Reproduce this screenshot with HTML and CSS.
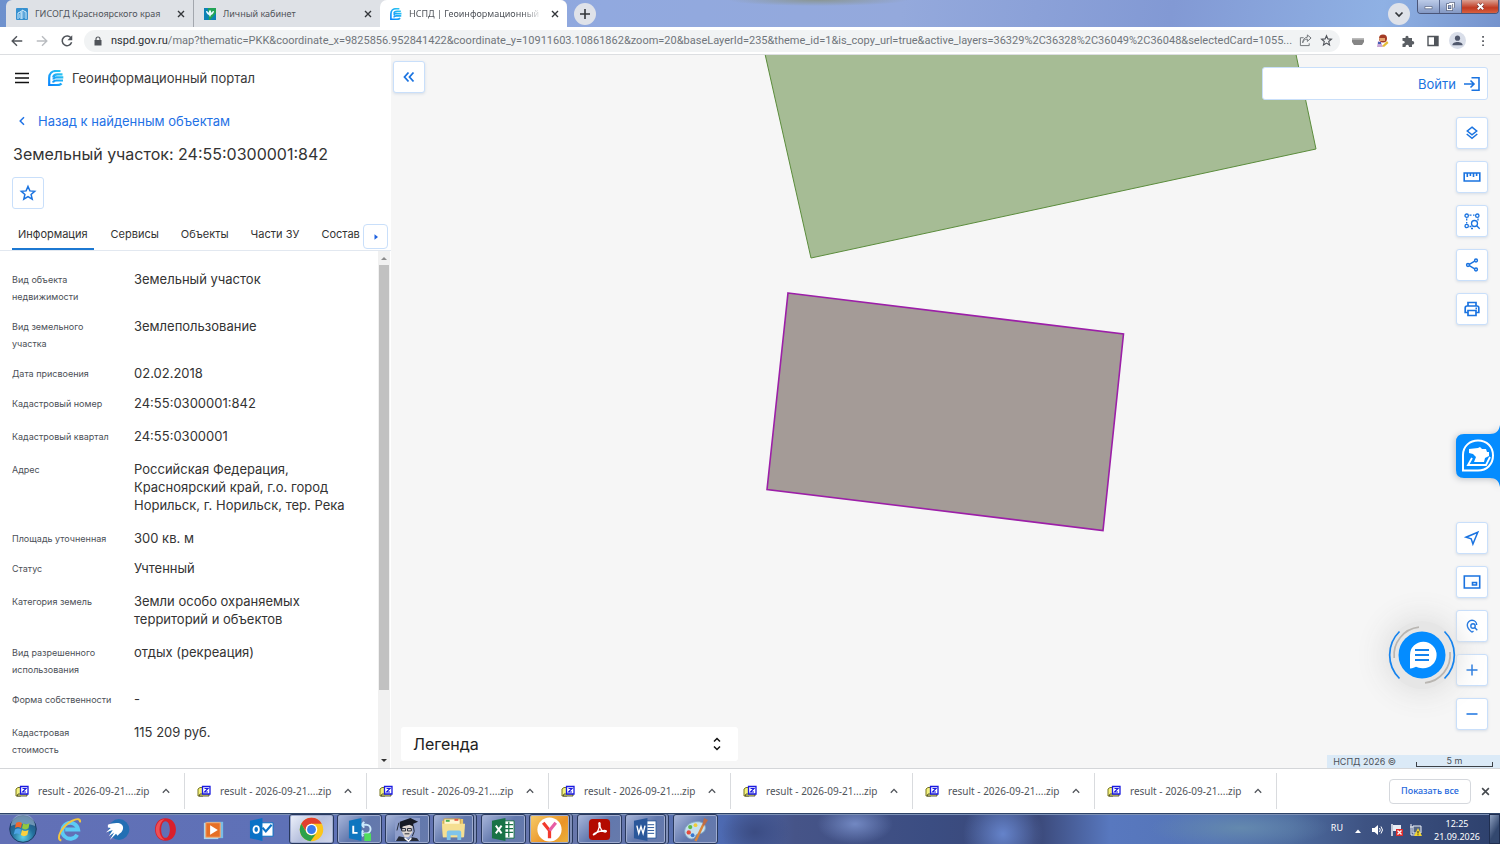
FILE: index.html
```html
<!DOCTYPE html>
<html lang="ru">
<head>
<meta charset="utf-8">
<title>НСПД | Геоинформационный портал</title>
<link rel="stylesheet" href="styles.css">
</head>
<body>
<svg class="defs" aria-hidden="true">
  <symbol id="zip" viewBox="0 0 14 12"><path d="M1 3.500 3 2h3v8.500H1z" fill="#f4f27c" stroke="#77751f"/><path d="M3 8.500h9v2H2z" fill="#f4f27c" stroke="#33331c" stroke-width=".8"/><path d="M5.500 1h7.500v7.500H5.500z" fill="#fff" stroke="#1a1ae0" stroke-width="1.300"/><path d="M7.500 3h3.500l-3.500 3.500H11" fill="none" stroke="#1a1ae0" stroke-width="1.100"/></symbol>
  <symbol id="up" viewBox="0 0 8 6"><path d="M.8 4.800 4 1.400l3.200 3.400" fill="none" stroke="#50545a" stroke-width="1.300"/></symbol>
  <symbol id="cross" viewBox="0 0 8 8"><path d="m1 1 6 6M7 1 1 7" fill="none" stroke="currentColor" stroke-width="1.400"/></symbol>
  <symbol id="nspd" viewBox="0 0 16 16"><path d="M5 15.200H1.200V8C1.200 3.500 4 1 8 1h4.500M5.200 7.500C5.500 5 7.500 4.300 9.500 4.300h5M5.500 9.500c0-1.600 1.200-2.100 3-2.100h6.800M5 12.500c.500-1.600 1.500-2 3.500-2H15M5 15.200h3.500c2.300 0 4-.5 5-1.700" fill="none" stroke="url(#brand)" stroke-width="2.200"/></symbol>
  <linearGradient id="brand" gradientUnits="userSpaceOnUse" x1="0" y1="16" x2="16" y2="0"><stop offset="0" stop-color="#067fff"/><stop offset="1" stop-color="#31d3ee"/></linearGradient>
</svg>

<header class="tabstrip">
  <div class="tabs">
    <div class="tab">
      <svg class="favicon" viewBox="0 0 12 12"><rect width="12" height="12" rx="1" fill="#3791d0"/><path d="M2 11V5l3-1.500V11M6 11V2l4 2v7M7.500 5h1M7.500 7h1M3 7h1M3 9h1M7.500 9h1" fill="none" stroke="#d9f0ff"/></svg>
      <span class="tab-title">ГИСОГД Красноярского края</span>
      <button class="tab-close" aria-label="Закрыть"><svg><use href="#cross"/></svg></button>
    </div>
    <div class="tab">
      <svg class="favicon" viewBox="0 0 12 12"><path d="M0 0h12v12H0z" fill="#0c82b5"/><path d="M4 0h8v5L6 12H5z" fill="#23a456"/><path d="M2 3c1 0 2 .5 3 2V3l1-1 1 1v2c1-1.500 2-2 3-2-.3 2-1.300 3.500-3 4L6 9 5 7C3.300 6.500 2.300 5 2 3z" fill="#e9faff"/></svg>
      <span class="tab-title">Личный кабинет</span>
      <button class="tab-close" aria-label="Закрыть"><svg><use href="#cross"/></svg></button>
    </div>
    <div class="tab tab-active">
      <svg class="favicon"><use href="#nspd"/></svg>
      <span class="tab-title tab-fade">НСПД | Геоинформационный по</span>
      <button class="tab-close" aria-label="Закрыть"><svg><use href="#cross"/></svg></button>
    </div>
  </div>
  <button class="round-btn" aria-label="Новая вкладка"><svg viewBox="0 0 12 12"><path d="M6 1v10M1 6h10" stroke="#33363a" stroke-width="1.600"/></svg></button>
  <div class="strip-space"></div>
  <button class="round-btn" aria-label="Поиск вкладок"><svg viewBox="0 0 12 12"><path d="m2.500 4.500 3.500 3.500 3.500-3.500" fill="none" stroke="#33363a" stroke-width="1.700"/></svg></button>
  <div class="window-btns">
    <button aria-label="Свернуть"><svg viewBox="0 0 12 10"><path d="M2 5h8v2.500H2z" fill="#fff" stroke="#4a5674" stroke-width=".7"/></svg></button>
    <button aria-label="Восстановить"><svg viewBox="0 0 12 10"><path d="M4.500 1.500h5v5M2.500 3h5v5.500h-5z" fill="none" stroke="#3b4664" stroke-width="2.600"/><path d="M4.500 1.500h5v5M2.500 3h5v5.500h-5z" fill="none" stroke="#fff" stroke-width="1.300"/></svg></button>
    <button class="win-close" aria-label="Закрыть окно"><svg viewBox="0 0 12 10"><path d="m3 2 6 6M9 2 3 8" stroke="#6a2a2a" stroke-width="3.400"/><path d="m3 2 6 6M9 2 3 8" stroke="#fff" stroke-width="2.200"/></svg></button>
  </div>
</header>

<nav class="toolbar">
  <button aria-label="Назад"><svg viewBox="0 0 16 16"><path d="M14 8H3M8 2.500 2.500 8 8 13.500" fill="none" stroke="#50545a" stroke-width="1.600"/></svg></button>
  <button aria-label="Вперёд"><svg viewBox="0 0 16 16"><path d="M2 8h11M8 2.500 13.500 8 8 13.500" fill="none" stroke="#b9bcc0" stroke-width="1.600"/></svg></button>
  <button aria-label="Обновить"><svg viewBox="0 0 16 16"><path d="M12.800 5A5.500 5.500 0 1 0 13.300 9.500" fill="none" stroke="#50545a" stroke-width="1.700"/><path d="M14 1.500V7H8.500z" fill="#50545a"/></svg></button>
  <div class="omnibox">
    <svg class="lock" viewBox="0 0 8 10"><path d="M.5 4h7v5.500h-7z" fill="#50545a"/><path d="M2 4.500V3a2 2 0 0 1 4 0v1.500" fill="none" stroke="#50545a" stroke-width="1.100"/></svg>
    <div class="url"><span class="host">nspd.gov.ru</span>/map?thematic=PKK&amp;coordinate_x=9825856.952841422&amp;coordinate_y=10911603.10861862&amp;zoom=20&amp;baseLayerId=235&amp;theme_id=1&amp;is_copy_url=true&amp;active_layers=36329%2C36328%2C36049%2C36048&amp;selectedCard=1055...</div>
    <button class="share-page" aria-label="Поделиться"><svg viewBox="0 0 14 14"><path d="M5 4H1.500v8.500h9.500V10M4 9.500C4.500 6.500 6.500 5.500 9 5.500V8l4-3.700L9 1v2.400C6 3.700 4.200 6 4 9.500z" fill="none" stroke="#6b6f74"/></svg></button>
    <button aria-label="В закладки"><svg viewBox="0 0 14 14"><path d="m7 1.800 1.500 3.500 3.800.3-2.900 2.500.9 3.700L7 9.800l-3.300 2 .9-3.700-2.900-2.500 3.800-.3z" fill="none" stroke="#50545a" stroke-width="1.200"/></svg></button>
  </div>
  <div class="extensions">
    <button aria-label="Расширение"><svg viewBox="0 0 14 14"><path d="M1 4.500h12V8l-2 3H3L1 8z" fill="#858585"/><path d="M1 4.500h12v1.300H1z" fill="#b5b5b5"/></svg></button>
    <button aria-label="Расширение"><svg viewBox="0 0 14 14"><circle cx="7" cy="4.500" r="4" fill="#a33b26"/><path d="M3 4h6v3H4z" fill="#e4a36e"/><path d="m2 7 3 1 2 5H1z" fill="#c9a6d4"/><path d="m6 12 5-5 1.500 2L8 13z" fill="#e4bd37"/><path d="M2 8h3v2H2z" fill="#465fb5"/></svg></button>
    <button aria-label="Расширения"><svg viewBox="0 0 14 14"><path d="M1.500 4h3C4 1 8 1 7.500 4H11v3c3-.5 3 4 0 3.500V13H8c0-3-3.500-3-3.500 0h-3v-3.300c3 0 3-3 0-3z" fill="#5a5e63"/></svg></button>
    <button aria-label="Боковая панель"><svg viewBox="0 0 14 14"><path d="M2 2.500h10v9H2z" fill="none" stroke="#50545a" stroke-width="1.400"/><path d="M8 2h4v10H8z" fill="#50545a"/></svg></button>
    <button class="avatar" aria-label="Профиль"><svg viewBox="0 0 14 14"><circle cx="7" cy="4.800" r="2.400" fill="#50586c"/><path d="M2.200 11.500c0-4 9.600-4 9.600 0z" fill="#50586c"/></svg></button>
    <button aria-label="Меню"><svg viewBox="0 0 14 14"><path d="M6.200 2h1.700v1.700H6.200zM6.200 6.200h1.700v1.700H6.200zM6.200 10.400h1.700v1.700H6.200z" fill="#50545a"/></svg></button>
  </div>
</nav>

<main class="portal">
  <aside class="panel">
    <div class="brand">
      <button class="burger" aria-label="Меню портала"><svg viewBox="0 0 14 12"><path d="M0 1.500h14M0 6h14M0 10.500h14" stroke="#111" stroke-width="1.700"/></svg></button>
      <svg class="brand-logo"><use href="#nspd"/></svg>
      <span>Геоинформационный портал</span>
    </div>
    <a class="back" href="#"><svg viewBox="0 0 8 10"><path d="M6 1.200 2.200 5 6 8.800" fill="none" stroke="currentColor" stroke-width="1.500"/></svg>Назад к найденным объектам</a>
    <h1>Земельный участок: 24:55:0300001:842</h1>
    <button class="tool fav" aria-label="В избранное"><svg viewBox="0 0 18 18"><path d="m9 2.500 1.900 4.400 4.800.4-3.600 3.200 1.100 4.700L9 12.700l-4.200 2.500 1.100-4.700-3.600-3.200 4.800-.4z" fill="none" stroke="currentColor" stroke-width="1.500"/></svg></button>
    <div class="card-tabs">
      <button class="card-tab selected">Информация</button>
      <button class="card-tab">Сервисы</button>
      <button class="card-tab">Объекты</button>
      <button class="card-tab">Части ЗУ</button>
      <button class="card-tab">Состав</button>
      <button class="tab-next" aria-label="Далее"><svg viewBox="0 0 6 8"><path d="M1.500 1.200 5 4 1.500 6.800z" fill="currentColor"/></svg></button>
    </div>
    <div class="details">
      <dl>
        <div><dt>Вид объекта недвижимости</dt><dd>Земельный участок</dd></div>
        <div><dt>Вид земельного участка</dt><dd>Землепользование</dd></div>
        <div><dt>Дата присвоения</dt><dd>02.02.2018</dd></div>
        <div class="roomy"><dt>Кадастровый номер</dt><dd>24:55:0300001:842</dd></div>
        <div class="roomy"><dt>Кадастровый квартал</dt><dd>24:55:0300001</dd></div>
        <div class="roomy"><dt>Адрес</dt><dd>Российская Федерация, Красноярский край, г.о. город Норильск, г. Норильск, тер. Река</dd></div>
        <div><dt>Площадь уточненная</dt><dd>300 кв. м</dd></div>
        <div class="roomy"><dt>Статус</dt><dd>Учтенный</dd></div>
        <div class="roomy"><dt>Категория земель</dt><dd>Земли особо охраняемых территорий и объектов</dd></div>
        <div><dt>Вид разрешенного использования</dt><dd>отдых (рекреация)</dd></div>
        <div class="roomy"><dt>Форма собственности</dt><dd>-</dd></div>
        <div><dt>Кадастровая стоимость</dt><dd>115 209 руб.</dd></div>
      </dl>
      <div class="scrollbar">
        <svg viewBox="0 0 6 4"><path d="M0 4 3 1l3 3z" fill="#8c8c8c"/></svg>
        <div class="track"><div class="thumb"></div></div>
        <svg viewBox="0 0 6 4"><path d="m0 0 3 3 3-3z" fill="#333"/></svg>
      </div>
    </div>
  </aside>

  <section class="map">
    <svg class="parcels" viewBox="391 55 1109 713" preserveAspectRatio="xMidYMid slice">
      <path d="M763 45 811 258 1316 149 1294 45z" fill="#a6bc95" stroke="#5b8c3c"/>
      <path d="M788 293 1123.500 334 1103 530.500 767 489.500z" fill="#a49b97" stroke="#9c1fa8" stroke-width="1.600"/>
    </svg>
    <button class="tool collapse" aria-label="Свернуть панель"><svg viewBox="0 0 18 18"><path d="M8.500 4.500 4.500 9l4 4.500M13.500 4.500 9.500 9l4 4.500" fill="none" stroke="currentColor" stroke-width="1.800"/></svg></button>
    <button class="login">Войти<svg viewBox="0 0 16 16"><path d="M0 8h9.500M6.500 4.500 10 8l-3.500 3.500M7.500 1.800H15v12.400H7.500" fill="none" stroke="currentColor" stroke-width="1.600"/></svg></button>
    <div class="tools tools-top">
      <button class="tool" aria-label="Слои"><svg viewBox="0 0 18 18"><path d="m9 3.200 4.700 3.800L9 10.800 4.300 7zM3.700 10 9 14.300 14.300 10" fill="none" stroke="currentColor" stroke-width="1.500"/></svg></button>
      <button class="tool" aria-label="Измерения"><svg viewBox="0 0 18 18"><path d="M1.200 5h15.600v8H1.200zM4.300 5v4M7.400 5v3M10.500 5v4M13.600 5v3" fill="none" stroke="currentColor" stroke-width="1.600"/></svg></button>
      <button class="tool" aria-label="Поиск по области"><svg viewBox="0 0 18 18"><g fill="none" stroke="currentColor" stroke-width="1.300"><circle cx="3.700" cy="3.700" r="1.700"/><circle cx="14.300" cy="3.700" r="1.700"/><circle cx="3.700" cy="14" r="1.700"/><path d="M6.500 3.200h2M10 3.200h1.500M3.700 6.500v2M3.700 10v1.500M6.500 14.500h2M15 6.500v2"/><circle cx="11.500" cy="11.500" r="3"/><path d="m13.700 13.700 3 3M8 16.500h2"/></g></svg></button>
      <button class="tool" aria-label="Поделиться ссылкой"><svg viewBox="0 0 18 18"><g fill="none" stroke="currentColor" stroke-width="1.500"><circle cx="5" cy="9" r="1.400"/><circle cx="13" cy="4.500" r="1.400"/><circle cx="13" cy="13.500" r="1.400"/><path d="m6.300 8.300 5.400-3.100M6.300 9.700l5.400 3.100"/></g></svg></button>
      <button class="tool" aria-label="Печать"><svg viewBox="0 0 18 18"><path d="M5 6V2.500h8V6M5 12.500H2.200V8c0-1.200.6-2 1.800-2h10c1.200 0 1.800.8 1.800 2v4.500H13M5 10.500h8V15.500H5zM12.500 8.400H14" fill="none" stroke="currentColor" stroke-width="1.700"/></svg></button>
    </div>
    <button class="side-badge" aria-label="Помощник">
      <svg viewBox="0 0 44 80"><path d="M44 8c-1 6-4 9-10 9H8q-8 0-8 8v28q0 8 8 8h26c6 0 9 3 10 9z" fill="#048cff"/><path d="M7 53.500V38C7 29 14 23.500 22 23.500c9 0 15 6.500 15 15s-6 15-15 15z" fill="none" stroke="#fff" stroke-width="2"/><path d="m13 32 9-1 2-1 2 2h4l1 3h2v4l-4 2-1 4H18l2-5-3-3-4-1z" fill="#fff"/><path d="m16 41-4 7h18l4-8" fill="none" stroke="#fff" stroke-width="1.800"/></svg>
    </button>
    <div class="tools tools-bottom">
      <button class="tool" aria-label="Моё местоположение"><svg viewBox="0 0 18 18"><path d="M14.800 3.200 3 8.200l5.200 1.600 1.700 5.200z" fill="none" stroke="currentColor" stroke-width="1.500"/></svg></button>
      <button class="tool" aria-label="Мини-карта"><svg viewBox="0 0 18 18"><path d="M1.300 3h15.400v12H1.300zM9.500 9.500h4v2.500h-4z" fill="none" stroke="currentColor" stroke-width="1.600"/></svg></button>
      <button class="tool" aria-label="Поиск на карте"><svg viewBox="0 0 18 18"><g fill="none" stroke="currentColor" stroke-width="1.400"><path d="M9 15.200C5.500 12.500 4.300 10.500 4.300 8A4.700 4.700 0 0 1 13.700 8"/><circle cx="10" cy="9" r="2.200"/><path d="m11.600 10.600 2.700 2.700M10.500 14l-1.500 1.200"/></g></svg></button>
      <button class="tool" aria-label="Приблизить"><svg viewBox="0 0 18 18"><path d="M9 3.500v11M3.500 9h11" stroke="currentColor" stroke-width="1.500"/></svg></button>
      <button class="tool" aria-label="Отдалить"><svg viewBox="0 0 18 18"><path d="M3.500 9h11" stroke="currentColor" stroke-width="1.500"/></svg></button>
    </div>
    <button class="chat" aria-label="Чат">
      <svg viewBox="0 0 68 68"><g fill="none" stroke-width="1.700"><path d="M11.500 10.500a33 33 0 0 0 0 47M56.500 10.500a33 33 0 0 1 0 47" stroke="#1583ee"/><path d="M6.200 37A28 28 0 0 1 31 6.200M62 31A28 28 0 0 1 37 61.800" stroke="#b9b6b2"/></g><circle cx="34" cy="34" r="23.500" fill="#048cff"/><path d="M22 47.500V34a13.300 13.300 0 1 1 13 13.300c-3 .2-5-1-7-1.500-1.500.4-3 1.700-6 1.700z" fill="#fff"/><path d="M27 29h14M27 34h14M27 39h14" stroke="#1583ee" stroke-width="1.900"/></svg>
    </button>
    <button class="legend">Легенда<svg viewBox="0 0 8 14"><path d="M1 4.500 4 1.500l3 3M1 9.500l3 3 3-3" fill="none" stroke="#111" stroke-width="1.500"/></svg></button>
    <div class="attribution"><span>НСПД 2026 ©</span><span class="scale">5 m</span></div>
  </section>
</main>

<footer class="downloads">
  <div class="download"><svg class="zip"><use href="#zip"/></svg><span>result - 2026-09-21....zip</span><button aria-label="Действия"><svg><use href="#up"/></svg></button></div>
  <div class="download"><svg class="zip"><use href="#zip"/></svg><span>result - 2026-09-21....zip</span><button aria-label="Действия"><svg><use href="#up"/></svg></button></div>
  <div class="download"><svg class="zip"><use href="#zip"/></svg><span>result - 2026-09-21....zip</span><button aria-label="Действия"><svg><use href="#up"/></svg></button></div>
  <div class="download"><svg class="zip"><use href="#zip"/></svg><span>result - 2026-09-21....zip</span><button aria-label="Действия"><svg><use href="#up"/></svg></button></div>
  <div class="download"><svg class="zip"><use href="#zip"/></svg><span>result - 2026-09-21....zip</span><button aria-label="Действия"><svg><use href="#up"/></svg></button></div>
  <div class="download"><svg class="zip"><use href="#zip"/></svg><span>result - 2026-09-21....zip</span><button aria-label="Действия"><svg><use href="#up"/></svg></button></div>
  <div class="download"><svg class="zip"><use href="#zip"/></svg><span>result - 2026-09-21....zip</span><button aria-label="Действия"><svg><use href="#up"/></svg></button></div>
  <button class="show-all">Показать все</button>
  <button class="shelf-close" aria-label="Закрыть панель загрузок"><svg><use href="#cross"/></svg></button>
</footer>

<div class="taskbar">
  <div class="pinned">
    <button class="start" aria-label="Пуск"><svg viewBox="0 0 28 28"><defs><radialGradient id="orb" cx=".5" cy=".8" r=".8"><stop offset="0" stop-color="#5fd0e8"/><stop offset=".5" stop-color="#236f9c"/><stop offset="1" stop-color="#294d78"/></radialGradient></defs><circle cx="14" cy="14" r="13.300" fill="url(#orb)" stroke="#1c3c66"/><path d="M2 11a12 12 0 0 1 24 0c-7-3-17-3-24 0z" fill="#a8c3d8" opacity=".55"/><path d="M7 8c2-1.500 4-1.500 6 0l-1 5c-2-1.500-4-1.500-6 0z" fill="#f0682d"/><path d="M14 8.300c2 1.300 4 1.300 6.500 0l-1 5c-2 1.500-4.500 1.500-6.500 0z" fill="#93c83e"/><path d="M6 14.500c2-1.500 4-1.500 6 0l-1.200 5c-2-1.500-4-1.500-6 0z" fill="#4da4e5"/><path d="M13 15c2 1.300 4 1.300 6.500 0l-1.200 5c-2 1.500-4.500 1.500-6.500 0z" fill="#fbd03f"/></svg></button>
    <button class="pin" aria-label="Internet Explorer"><svg viewBox="0 0 26 26"><path d="M21 18.500A8.300 8.300 0 1 1 22 13H8.500" fill="none" stroke="#5ccbf5" stroke-width="4"/><path d="M4.500 24.500C-2 23 5 9.500 15.500 4c6-3 9-2 8.500 1.500" fill="none" stroke="#f3c640" stroke-width="2"/></svg></button>
    <button class="pin" aria-label="Спутник"><svg viewBox="0 0 26 26"><circle cx="14.500" cy="13" r="10.800" fill="#236fb4"/><path d="M3 8C8 6 16 5 18 8.500c2 3 0 7-3 9l-2 2-1.500-2L5 24l4.500-8L4 20l4-6.500L1 16l5-4.500L3 11z" fill="#fff"/></svg></button>
    <button class="pin" aria-label="Opera"><svg viewBox="0 0 26 26"><path d="M13 1.300c14.500 0 14.500 23.400 0 23.400S-1.500 1.300 13 1.300zm0 3c-6 0-6 17.400 0 17.400s6-17.400 0-17.400z" fill="#d91f2c" fill-rule="evenodd"/><path d="M12 2.300C0 3 0 23 12 23.700 5 20 5 6 12 2.300z" fill="#ee5056"/></svg></button>
    <button class="pin" aria-label="Медиаплеер"><svg viewBox="0 0 26 26"><path d="M6 5h17v17H6z" fill="#78bce5"/><path d="M3 6h15v17H3z" fill="#a9d5ed"/><path d="M5 6h15v15H5z" fill="#e66f26" stroke="#f6ab72"/><path d="m9.500 8.500 8 5-8 5z" fill="#fff"/></svg></button>
    <button class="pin" aria-label="Outlook"><svg viewBox="0 0 26 26"><path d="M11 6h14v14H11z" fill="#fff" stroke="#0a72c6"/><path d="m14 11 3.500 4 6-7" fill="none" stroke="#0a72c6" stroke-width="2.200"/><path d="m1 4 13-3v24L1 22z" fill="#0a72c6"/><ellipse cx="7.500" cy="13" rx="2.800" ry="3.500" fill="none" stroke="#fff" stroke-width="1.900"/></svg></button>
  </div>
  <div class="running">
    <button class="app app-light" aria-label="Chrome"><svg viewBox="0 0 26 26"><circle cx="13" cy="13" r="12.200" fill="#fbc51b"/><path d="M2.400 7A12.200 12.200 0 0 1 23.600 7H13a6 6 0 0 0-5.300 8.500z" fill="#e2402f"/><path d="M2.400 7A12.200 12.200 0 0 0 12 25.200l5.500-7.500C14 20 9.500 19 7.800 16z" fill="#2da14c"/><circle cx="13" cy="13" r="6" fill="#fff"/><circle cx="13" cy="13" r="4.600" fill="#3b7ced"/></svg></button>
    <button class="app" aria-label="Lync"><svg viewBox="0 0 26 26"><path d="M15 8h5a4.500 4.500 0 0 1 0 9h-6M18 5l-3 3 3 3M17 14l-3 3 3 3" fill="none" stroke="#cdeafb" stroke-width="2"/><path d="m2 4 13-3v24L2 22z" fill="#0e76bf"/><path d="M6.500 9v7.500H11" fill="none" stroke="#fff" stroke-width="2"/><path d="M18 17h7v8h-7z" fill="#50dd5c"/></svg></button>
    <button class="app" aria-label="Консультант"><svg viewBox="0 0 26 26"><path d="M0 1h26v24H0z" fill="#8d9dca"/><path d="M7 8h11v8l-4 5H10l-3-6z" fill="#ded6d1"/><path d="m5 5 11-4 8 4-5 2v3l-4-2-7 2-1 4-2-3V7z" fill="#171b25"/><path d="M7 12h4v2.500H7zM13 12h4v2.500h-4zM19 9l1 6-2 5M10 17.500h5M4 6l-2 8" fill="none" stroke="#222936"/><path d="m1 25 3-5 5 1 4 3 5-3 5 1 2 3z" fill="#262b38"/><path d="m10 22 4 3 3-3" stroke="#fff" fill="none" stroke-width="1.500"/></svg></button>
    <button class="app stacked" aria-label="Проводник"><svg viewBox="0 0 26 26"><path d="M1 4h8l2-2h12v19H2z" fill="#e9c76b"/><path d="M3 2h17v8H3z" fill="#fff6d2" stroke="#c79f46"/><path d="M1 7h24l-1 14H2z" fill="#f5df92"/><path d="M6 24v-8q0-2 2-2h11q2 0 2 2v8h-4v-5h-7v5z" fill="#7fc4eb"/><path d="M5 3h4v2H5z" fill="#49ad4d"/><path d="M14 2h4v2h-4z" fill="#e95c44"/></svg></button>
    <button class="app" aria-label="Excel"><svg viewBox="0 0 26 26"><path d="M13 4h11v18H13z" fill="#fff" stroke="#197346"/><path d="M14 8h9M14 12h9M14 16h9M18.500 5v16" stroke="#197346" stroke-width="1.300"/><path d="m1 4 14-3v24L1 22z" fill="#197346"/><path d="m5 9 6 8M11 9l-6 8" stroke="#fff" stroke-width="2"/></svg></button>
    <button class="app app-yandex stacked" aria-label="Яндекс"><svg viewBox="0 0 26 26"><circle cx="13" cy="13" r="12.600" fill="#fff"/><path d="m6.500 6 6.500 8v8" fill="none" stroke="#f23a2d" stroke-width="3.400"/><path d="m19.500 6-6.500 8" stroke="#e75da5" stroke-width="3.400"/></svg></button>
    <button class="app" aria-label="Acrobat"><svg viewBox="0 0 26 26"><rect x="2" y="2" width="22" height="22" rx="4" fill="#b30b00"/><path d="M7 18.500C11 17 13.500 11 12.500 7.500c-.8-2 1.500-2 1 0-.7 5 3 8.500 6 8 1.500-.5 0-2-2-1.500-4 .3-7 1.500-9.500 3-1.500 1-1.700 1.800-1 1.500z" fill="none" stroke="#fff" stroke-width="1.400"/></svg></button>
    <button class="app stacked" aria-label="Word"><svg viewBox="0 0 26 26"><path d="M13 4h11v18H13z" fill="#fff" stroke="#2a579a"/><path d="M15 8h7M15 11h7M15 14h7M15 17h7" stroke="#2a579a"/><path d="m1 4 14-3v24L1 22z" fill="#2a579a"/><path d="m4 9 2 8 2.300-7L10.500 17l2-8" fill="none" stroke="#fff" stroke-width="1.500"/></svg></button>
    <button class="app" aria-label="Paint"><svg viewBox="0 0 26 26"><path d="M2 17C0 9 9 4 17 5c8 1 8 10 2 12-3 1-5 0-6 3-2 5-9 3-11-3z" fill="#c7e0ee" stroke="#84a9c5"/><circle cx="6" cy="16" r="2.300" fill="#e54c3c"/><circle cx="7.500" cy="10.500" r="2.200" fill="#60ba49"/><circle cx="13" cy="8.500" r="2" fill="#f0cc3b"/><circle cx="10" cy="19" r="2" fill="#3a78ce"/><path d="m13 25 8-17" stroke="#d9853a" stroke-width="2.500"/><path d="m20 8 2-7 4 2-4 6z" fill="#bd6c46"/></svg></button>
  </div>
  <div class="tray">
    <span class="lang">RU</span>
    <svg class="tray-up" viewBox="0 0 6 4"><path d="m0 4 3-3.500L6 4z" fill="#fff"/></svg>
    <svg class="tray-icon" viewBox="0 0 12 12"><path d="M0 4h2.500L6 1v10L2.500 8H0z" fill="#fff"/><path d="M7.500 4q1.500 2 0 4M9 2.500q3 3.500 0 7" fill="none" stroke="#fff"/></svg>
    <svg class="tray-icon" viewBox="0 0 12 12"><path d="M1 0v12" stroke="#fff" stroke-width="1.400"/><path d="M2 1h8v6H2z" fill="#e8edf6"/><path d="M5 5h7v7H5z" fill="#dc2b2b"/><path d="m6.500 6.500 4 4m0-4-4 4" stroke="#fff" stroke-width="1.300"/></svg>
    <svg class="tray-icon" viewBox="0 0 12 12"><path d="M3 2h8v7H3zM1 0v4M0 3h3M1 4v7h4" fill="#536586" stroke="#eef2f8"/><path d="m8 4 4 8H4z" fill="#f4d62d"/><path d="M8 7v2.500M8 10.300v1" stroke="#222"/></svg>
    <div class="clock"><time>12:25</time><span>21.09.2026</span></div>
    <button class="show-desktop" aria-label="Свернуть все окна"></button>
  </div>
</div>
</body>
</html>
```
FILE: styles.css
```css
* { box-sizing: border-box; }
body {
  margin: 0;
  height: 100vh;
  display: flex;
  flex-direction: column;
  overflow: hidden;
  background: #fff;
  font-family: Inter, "Noto Sans", sans-serif;
  color: #333;
}
button { border: 0; padding: 0; background: none; font: inherit; color: inherit; display: flex; align-items: center; justify-content: center; white-space: nowrap; }
svg { display: block; flex: none; }
.defs { position: absolute; width: 0; height: 0; }

/* Browser frame */
.tabstrip {
  flex: none;
  height: 27px;
  display: flex;
  align-items: center;
  background:
    radial-gradient(ellipse 90px 6px at 818px 0, #8a9694, transparent),
    linear-gradient(100deg, #6e91cd 0, #91a9df 40%, #94a9dc 60%, #8299d4 78%, #8fb1e4 92%, #7593cd 100%);
  font-family: "Noto Sans", sans-serif;
  font-size: 9px;
}
.tabs { display: flex; align-self: stretch; margin-left: 6px; background: #dee1e6; border-radius: 6px 6px 0 0; }
.tab { width: 187px; display: flex; align-items: center; padding: 0 6px 0 10px; gap: 7px; color: #50545a; }
.tab + .tab { border-left: 1px solid #a3a7ae; }
.tab.tab-active { border: 0; background: #fff; border-radius: 7px 7px 0 0; }
.favicon { width: 12px; height: 12px; }
.tab-title { flex: 1; white-space: nowrap; overflow: hidden; }
.tab-fade { -webkit-mask-image: linear-gradient(90deg, #000 85%, transparent); mask-image: linear-gradient(90deg, #000 85%, transparent); }
.tab-close { width: 12px; height: 12px; color: #33363a; }
.tab-close svg { width: 8px; height: 8px; }
.round-btn { flex: none; width: 22px; height: 22px; border-radius: 50%; background: #dfe2e9; margin: 0 7px; }
.round-btn svg { width: 12px; height: 12px; }
.strip-space { flex: 1; }
.window-btns { align-self: flex-start; display: flex; height: 14px; margin-right: 1px; border: 1px solid #4a5578; border-top: 0; border-radius: 0 0 4px 4px; overflow: hidden; }
.window-btns button { width: 22px; background: linear-gradient(#bccbe8, #8398c4); border-right: 1px solid #56658c; }
.window-btns svg { width: 11px; height: 9px; }
.window-btns .win-close { width: 36px; border: 0; background: linear-gradient(#dba193, #c13a22 60%, #d9603f); }

.toolbar { flex: none; height: 28px; display: flex; align-items: center; padding: 0 9px; background: #fff; border-bottom: 1px solid #dcdee1; }
.toolbar > button { width: 16px; margin-right: 9px; }
.toolbar > button svg { width: 14px; height: 14px; }
.omnibox { flex: 1; min-width: 0; height: 22px; display: flex; align-items: center; padding: 0 1px 0 10px; border-radius: 11px; background: #f1f3f4; }
.lock { width: 8px; height: 10px; margin-right: 9px; }
.url { flex: 1; min-width: 0; overflow: hidden; white-space: nowrap; font: 11px/16px Roboto, "Noto Sans", sans-serif; color: #70757b; }
.host { color: #2b2e33; }
.omnibox button { width: 25px; }
.omnibox .share-page { width: 18px; }
.omnibox button svg { width: 13px; height: 13px; }
.extensions { display: flex; margin-left: 5px; margin-right: -4px; }
.extensions button { width: 25px; height: 18px; }
.extensions svg { width: 14px; height: 14px; }
.avatar svg { border-radius: 50%; background: #d9dee9; width: 17px; height: 17px; padding: 1px; }

/* Portal */
.portal { flex: 1; min-height: 0; display: flex; }
.panel { flex: none; width: 391px; display: flex; flex-direction: column; background: #fff; }
.brand { display: flex; align-items: center; height: 45px; padding-left: 15px; font-size: 13px; color: #3a3a3a; }
.burger svg { width: 14px; height: 12px; }
.brand-logo { width: 16px; height: 16px; margin: 0 8px 0 19px; }
.back { display: flex; align-items: center; gap: 12px; height: 18px; margin: 12px 0 0 18px; font-size: 13px; color: #1f72e6; text-decoration: none; }
.back svg { width: 8px; height: 10px; }
h1 { margin: 13px 13px 12px; font-size: 16px; line-height: 22px; font-weight: 400; color: #333; }
.tool { width: 32px; height: 32px; border: 1px solid #c9dffa; border-radius: 3px; background: #fff; color: #1a73e0; box-shadow: 0 1px 3px #d5dce5; }
.tool svg { width: 18px; height: 18px; }
.fav { margin-left: 12px; box-shadow: none; }
.card-tabs { display: flex; align-items: stretch; height: 42px; padding-left: 12px; border-bottom: 1px solid #e2e8f0; font-size: 11px; color: #333; }
.card-tab { padding: 11px 6px 0; margin-right: 6px; border-bottom: 2px solid transparent; }
.card-tab + .card-tab { padding: 11px 11px 0; margin: 0; }
.card-tab.selected { border-color: #1c78d2; }
.card-tab:nth-last-child(2) { padding-right: 0; }
.tab-next { flex: none; width: 25px; height: 25px; margin: 15px 3px 0 auto; border: 1px solid #c9dffa; border-radius: 4px; color: #1f62e0; background: #fff; }
.tab-next svg { width: 6px; height: 8px; }
.details { flex: 1; min-height: 0; display: flex; }
dl { flex: 1; min-width: 0; margin: 0; padding: 19px 28px 0 12px; overflow: hidden; }
dl > div { display: flex; padding-bottom: 12px; }
dl > .roomy { padding-bottom: 15px; }
dt { flex: none; width: 104px; margin-right: 18px; padding-top: 1px; font-size: 9px; line-height: 17px; color: #4c5057; }
dd { flex: 1; margin: 0; font-size: 13px; line-height: 18px; color: #333; }
.scrollbar { flex: none; width: 12px; margin-right: 1px; display: flex; flex-direction: column; align-items: center; padding: 5px 0; gap: 5px; background: #f1f1f1; }
.scrollbar svg { width: 6px; height: 4px; }
.track { flex: 1; align-self: stretch; padding: 0 1px; }
.thumb { height: 87%; background: #c1c1c1; }

.map { position: relative; flex: 1; min-width: 0; overflow: hidden; background: #f6f6f6; }
.parcels { position: absolute; inset: 0; width: 100%; height: 100%; }
.collapse { position: absolute; top: 6px; left: 2px; }
.login { position: absolute; top: 12px; right: 12px; width: 226px; height: 33px; justify-content: flex-end; gap: 8px; padding-right: 7px; border: 1px solid #c9dffa; border-radius: 3px; background: #fff; color: #1a73e0; font-size: 13px; }
.login svg { width: 16px; height: 16px; }
.tools { position: absolute; right: 12px; display: flex; flex-direction: column; gap: 12px; }
.tools-top { top: 62px; }
.tools-bottom { bottom: 38px; }
.side-badge { position: absolute; right: 0; bottom: 271px; filter: drop-shadow(-1px 1px 3px #b9bec5); }
.side-badge svg { width: 44px; height: 80px; }
.chat { position: absolute; right: 44px; bottom: 79px; border-radius: 50%; background: #e6e6e6; box-shadow: 0 0 30px 4px #dedede; }
.chat svg { width: 68px; height: 68px; }
.legend { position: absolute; left: 10px; bottom: 7px; width: 337px; max-width: 80%; height: 34px; justify-content: space-between; padding: 0 17px 0 12px; border-radius: 3px; background: #fff; font-size: 16px; color: #222; }
.legend svg { width: 8px; height: 14px; }
.attribution { position: absolute; right: 0; bottom: 0; height: 13px; display: flex; align-items: center; gap: 20px; padding: 0 7px 0 6px; background: #dbeaf7; font-size: 9px; line-height: 12px; color: #4b5159; }
.scale { width: 77px; height: 11px; line-height: 10px; position: relative; text-align: center; }
.scale::after { content: ""; position: absolute; inset: 6px 0 0; border: 1px solid #3c4147; border-top: 0; }

/* Downloads */
.downloads { flex: none; height: 45px; display: flex; align-items: center; background: #fff; border-top: 1px solid #d4d6d9; font: 10px/16px "Noto Sans", sans-serif; color: #50545a; }
.download { flex: 0 1 182px; height: 36px; display: flex; align-items: center; padding-left: 12px; border-right: 1px solid #d9dbde; white-space: nowrap; }
.download span { width: 110px; margin: 0 10px 0 9px; }
.download:first-child { flex-basis: 185px; padding-left: 15px; }
.zip { width: 14px; height: 13px; }
.download button svg { width: 8px; height: 6px; margin-left: 4px; }
.show-all { width: 82px; height: 25px; margin-left: auto; border: 1px solid #d5d8dd; border-radius: 4px; color: #2467dc; font-size: 9px; font-weight: 500; }
.shelf-close { margin: 0 10px; color: #45494e; }
.shelf-close svg { width: 9px; height: 9px; }

/* Taskbar */
.taskbar {
  flex: none;
  height: 31px;
  display: flex;
  align-items: stretch;
  border-top: 1px solid #2e4468;
  box-shadow: inset 0 1px #7c90b5;
  background:
    radial-gradient(ellipse 38px 20px at 855px 10px, #7288c2, transparent),
    radial-gradient(ellipse 40px 40px at 1003px 20px, #6583ca, transparent),
    radial-gradient(ellipse 90px 20px at 1240px 14px, #6489ae, transparent),
    radial-gradient(ellipse 34px 26px at 755px 18px, #3b4c83, transparent),
    linear-gradient(90deg, #6270b6 0, #5e71b7 20%, #6877aa 40%, #4d6ab2 48%, #465488 53%, #3b4d82 62%, #3a4777 69%, #5878bf 74%, #5474b6 81%, #4d6b9f 86%, #3e5383 91%, #2d406c 100%);
}
.pinned, .running { display: flex; align-items: center; }
.start { width: 45px; }
.start svg { width: 28px; height: 28px; }
.pin { width: 48px; }
.pin svg, .app svg { width: 25px; height: 25px; }
.running { gap: 3px; margin-left: 4px; }
.app { width: 45px; height: 30px; border: 1px solid #28385c; border-radius: 3px; box-shadow: inset 0 0 0 1px #9facd0; background: linear-gradient(135deg, #a9b7db, #6278ad 50%, #677aab); }
.app-light { background: linear-gradient(135deg, #eef2fb, #b5bfdd 50%, #d2d7ea); }
.app-yandex { background: linear-gradient(135deg, #f5cd6c, #eb9427 60%, #e9b33e); }
.stacked { width: 41px; margin-right: 4px; box-shadow: inset 0 0 0 1px #9facd0, 2px 0 #8190b9, 3px 0 #28385c; }
.tray { display: flex; align-items: center; margin-left: auto; color: #fff; font: 9px/13px "Noto Sans", sans-serif; }
.lang { margin-right: 12px; padding-bottom: 4px; }
.tray-up { width: 6px; height: 4px; margin-right: 11px; margin-top: 3px; }
.tray-icon { width: 12px; height: 12px; margin-right: 7px; margin-top: 2px; }
.clock { display: flex; flex-direction: column; align-items: center; margin: 2px 9px 0 5px; }
.show-desktop { align-self: stretch; width: 11px; border: 1px solid #1f2e50; background: linear-gradient(120deg, #8fa1c0, #33486f 60%); }
```
